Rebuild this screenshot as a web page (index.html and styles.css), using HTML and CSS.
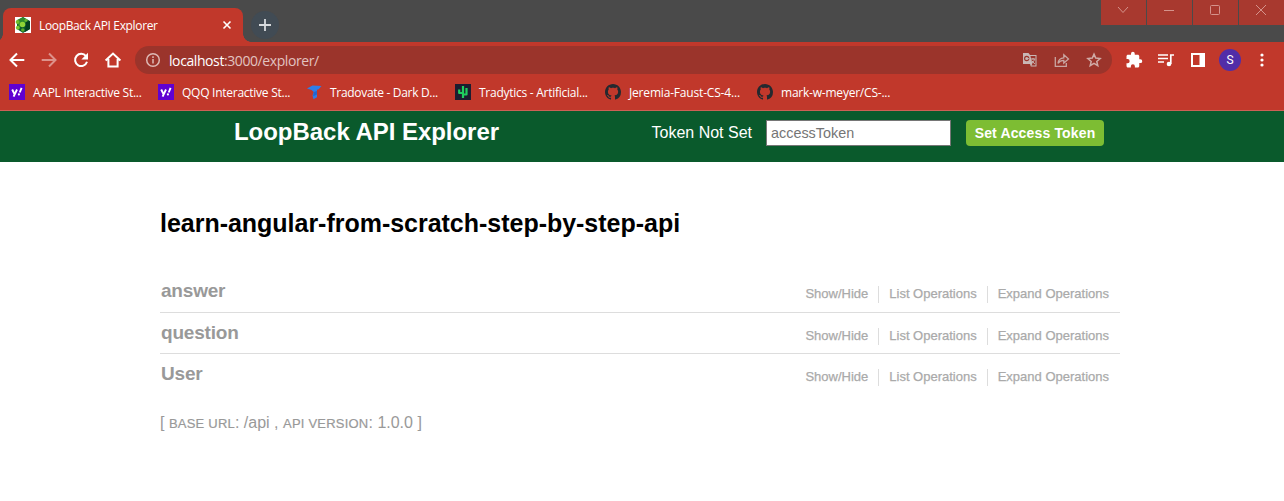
FILE: index.html
```html
<!DOCTYPE html>
<html lang="en">
<head>
<meta charset="utf-8">
<title>LoopBack API Explorer</title>
<link rel="stylesheet" href="styles.css">
</head>
<body>
<svg class="defs" width="0" height="0">
  <symbol id="yahoo" viewBox="0 0 16 16"><path fill="#5f01d1" d="M0 0h16v16H0z"/><path fill="none" stroke="#fff" stroke-width="1.9" d="M3.200 5.500l2.300 4.700M8 5.500L4.600 12.600M12.600 3.800l-1.900 4.700"/><circle cx="9.900" cy="10.400" r="1.100" fill="#fff"/></symbol>
  <symbol id="github" viewBox="0 0 16 16"><path fill="#24292f" d="M8 0C3.58 0 0 3.58 0 8c0 3.54 2.29 6.53 5.47 7.59.4.07.55-.17.55-.38 0-.19-.01-.82-.01-1.49-2.01.37-2.53-.49-2.69-.94-.09-.23-.48-.94-.82-1.13-.28-.15-.68-.52-.01-.53.63-.01 1.08.58 1.23.82.72 1.21 1.87.87 2.33.66.07-.52.28-.87.51-1.07-1.78-.2-3.64-.89-3.64-3.95 0-.87.31-1.59.82-2.15-.08-.2-.36-1.02.08-2.12 0 0 .67-.21 2.2.82.64-.18 1.32-.27 2-.27s1.36.09 2 .27c1.53-1.04 2.2-.82 2.2-.82.44 1.1.16 1.92.08 2.12.51.56.82 1.27.82 2.15 0 3.07-1.87 3.75-3.65 3.95.29.25.54.73.54 1.48 0 1.07-.01 1.93-.01 2.2 0 .21.15.46.55.38A8.01 8.01 0 0016 8c0-4.42-3.58-8-8-8z"/></symbol>
</svg>

<div class="tabstrip">
  <div class="tab">
    <svg class="favicon" width="16" height="16" viewBox="0 0 16 16"><path fill="#fff" d="M0 0h16v16H0z"/><path fill="#0a5a2c" d="M8 0l7 4v8l-7 4-6-4V4z"/><path fill="#043f20" d="M11 5l4-1v8l-5 3z"/><path fill="#2e8a2c" d="M2 3l6-3 4 3-3 5-6 2z"/><circle cx="7.500" cy="7.500" r="2.800" fill="#8fd436"/><circle cx="2.600" cy="5" r="2" fill="#6fbe2e"/><circle cx="2.800" cy="10.800" r="2" fill="#7cc832"/><circle cx="11" cy="3.300" r="1.500" fill="#69b82c"/><circle cx="7.800" cy="13" r="1.800" fill="#58a82c"/></svg>
    <span class="tab-title">LoopBack API Explorer</span>
    <svg class="tab-close" width="10" height="10" viewBox="0 0 10 10"><path d="M1.500 1.500l7 7m0-7l-7 7" stroke="#fff" stroke-width="1.600"/></svg>
  </div>
  <div class="new-tab"><svg width="14" height="14" viewBox="0 0 14 14"><path d="M7 1v12M1 7h12" stroke="#d7dadd" stroke-width="1.800"/></svg></div>
  <div class="window-buttons">
    <div class="wbtn"><svg width="12" height="12" viewBox="0 0 12 12"><path d="M1 3l5 5.500L11 3"/></svg></div>
    <div class="wbtn"><svg width="12" height="12" viewBox="0 0 12 12"><path d="M1 6.500h10"/></svg></div>
    <div class="wbtn"><svg width="12" height="12" viewBox="0 0 12 12"><rect x="1.500" y="1.500" width="9" height="9" rx="1"/></svg></div>
    <div class="wbtn"><svg width="12" height="12" viewBox="0 0 12 12"><path d="M1 1l10 10M11 1L1 11"/></svg></div>
  </div>
</div>

<div class="toolbar">
  <div class="nav">
    <svg width="24" height="24" viewBox="0 0 24 24"><path d="M19.300 12H6M12 5.500L5.500 12l6.500 6.500"/></svg>
    <svg class="disabled" width="24" height="24" viewBox="0 0 24 24"><path d="M4.700 12H18M12 5.500l6.500 6.500-6.500 6.500"/></svg>
    <svg width="24" height="24" viewBox="0 0 24 24"><path d="M17 8.200A6.100 6.100 0 1 0 18 13.800"/><path class="solid" d="M19 4.800v6.600h-6.600z"/></svg>
    <svg width="24" height="24" viewBox="0 0 24 24"><path d="M4.600 12.600L12 5.600l7.400 7M7.400 11v7.600h9.200V11"/></svg>
  </div>
  <div class="omnibox">
    <svg width="16" height="16" viewBox="0 0 16 16"><g fill="none" stroke="#deb9b5" stroke-width="1.500"><circle cx="8" cy="8" r="6.300"/><path d="M8 7v4.500M8 4.300v1.600"/></g></svg>
    <span class="url"><b>localhost</b>:3000/explorer/</span>
    <div class="page-actions">
      <svg width="16" height="16" viewBox="0 0 16 16"><path fill="#c9b7b5" d="M1 1h5.500L8 3h6.500v11.500H8.800L8 12H1z"/><path fill="#9b342b" d="M8.400 4h5.100v9.500H9.400l1-1.700z"/><circle cx="4.700" cy="6.500" r="2.100" fill="none" stroke="#9b342b" stroke-width="1.100"/><path d="M4.800 6.600h2.100M8.800 7h4.500M11 6v1.500m1.500-.2c-.5 1.800-1.500 3-3 4M9.600 8.600l3.200 3.400" fill="none" stroke="#c9b7b5" stroke-width="1"/></svg>
      <svg width="16" height="16" viewBox="0 0 16 16"><g fill="none" stroke="#c9a5a1" stroke-width="1.300"><path d="M1.300 5v9.400h11V11"/><path d="M4 11.300C4.400 7.700 6.400 6 9.800 5.800V2.700l4.700 4.200-4.700 4.200V8.300C7.200 8.300 5.400 9.200 4 11.300z"/></g></svg>
      <svg width="16" height="16" viewBox="0 0 16 16"><path fill="none" stroke="#d0aaa6" stroke-width="1.500" d="M8 2.100l1.700 4 4.400.4-3.300 2.900 1 4.300L8 11.400l-3.800 2.300 1-4.300-3.300-2.900 4.400-.4z"/></svg>
    </div>
  </div>
  <div class="extensions">
    <svg width="18" height="18" viewBox="0 0 24 24"><path fill="#fff" d="M20.5 11H19V7c0-1.1-.9-2-2-2h-4V3.5a2.5 2.5 0 0 0-5 0V5H4c-1.1 0-2 .9-2 2v3.800h1.500a2.700 2.700 0 0 1 0 5.400H2V20c0 1.100.9 2 2 2h3.800v-1.500a2.700 2.700 0 0 1 5.400 0V22H17c1.100 0 2-.9 2-2v-4h1.500a2.500 2.500 0 0 0 0-5z"/></svg>
    <svg width="18" height="18" viewBox="0 0 18 18"><path fill="none" stroke="#fff" stroke-width="1.700" d="M1 4h10M1 7.500h10M1 11h6M13.800 13V4H17"/><circle cx="12" cy="13" r="2.300" fill="#fff"/></svg>
    <svg width="18" height="18" viewBox="0 0 18 18"><path fill="#fff" fill-rule="evenodd" d="M2 2h14v14H2zM4 4v10h6.500V4z"/></svg>
    <div class="avatar">S</div>
    <svg class="more" width="4" height="16" viewBox="0 0 4 16"><g fill="#fff"><circle cx="2" cy="3" r="1.600"/><circle cx="2" cy="8" r="1.600"/><circle cx="2" cy="13" r="1.600"/></g></svg>
  </div>
</div>

<div class="bookmarks">
  <div class="bookmark"><svg width="16" height="16"><use href="#yahoo"/></svg><span>AAPL Interactive St...</span></div>
  <div class="bookmark"><svg width="16" height="16"><use href="#yahoo"/></svg><span>QQQ Interactive St...</span></div>
  <div class="bookmark bm-tradovate"><svg width="16" height="16" viewBox="0 0 16 16"><path fill="#2f7de8" d="M0 4.500L5.500 1.500 14.500 2l-2.800 3.200-1.700.6v7.500l-3.500 2-1-3.800L6.800 8 4.500 6z"/><path fill="#2265d0" d="M6.800 8l3.200-1v3.500l-4 1.800z"/></svg><span>Tradovate - Dark D...</span></div>
  <div class="bookmark bm-tradytics"><svg width="16" height="16" viewBox="0 0 16 16"><path fill="#1c1d30" d="M0 0h16v16H0z"/><path fill="none" stroke="#1fce5e" stroke-width="2.200" stroke-linejoin="round" d="M8 14V2M4.200 5.500V9H8M8 10.500h3.500V4"/></svg><span>Tradytics - Artificial...</span></div>
  <div class="bookmark bm-jeremia"><svg width="16" height="16"><use href="#github"/></svg><span>Jeremia-Faust-CS-4...</span></div>
  <div class="bookmark bm-mark"><svg width="16" height="16"><use href="#github"/></svg><span>mark-w-meyer/CS-...</span></div>
</div>

<header class="header">
  <h1 class="logo">LoopBack API Explorer</h1>
  <form class="token-form">
    <span class="token-status">Token Not Set</span>
    <input class="token-input" type="text" placeholder="accessToken">
    <a class="token-button">Set Access Token</a>
  </form>
</header>

<main class="content">
  <h2 class="api-title">learn-angular-from-scratch-step-by-step-api</h2>
  <ul class="resources">
    <li class="resource"><h3>answer</h3><div class="ops"><a>Show/Hide</a><a>List Operations</a><a>Expand Operations</a></div></li>
    <li class="resource"><h3>question</h3><div class="ops"><a>Show/Hide</a><a>List Operations</a><a>Expand Operations</a></div></li>
    <li class="resource"><h3>User</h3><div class="ops"><a>Show/Hide</a><a>List Operations</a><a>Expand Operations</a></div></li>
  </ul>
  <p class="footer">[ <span>base url</span>: /api , <span>api version</span>: 1.0.0 ]</p>
</main>
</body>
</html>
```
FILE: styles.css
```css
* { box-sizing: border-box; }
body { margin: 0; height: 501px; overflow: hidden; background: #fff; font-family: "Liberation Sans", Arial, sans-serif; }
h1, h2, h3, p, ul { margin: 0; padding: 0; }
svg { display: block; flex: none; }
.defs { display: none; }

/* Browser chrome */
.tabstrip, .toolbar, .bookmarks { display: flex; font-family: "Open Sans", "Noto Sans", sans-serif; color: #fff; white-space: nowrap; }
.tabstrip { height: 42px; background: #4a4a4a; padding-left: 3px; }
.tab { position: relative; width: 240px; height: 34px; margin-top: 8px; padding: 0 11px 0 12px; display: flex; align-items: center; background: #c1382b; border-radius: 8px 8px 0 0; }
.tab::before, .tab::after { content: ""; position: absolute; bottom: 0; width: 8px; height: 8px; }
.tab::before { left: -8px; background: radial-gradient(circle at 0 0, transparent 7.500px, #c1382b 8px); }
.tab::after { right: -8px; background: radial-gradient(circle at 100% 0, transparent 7.500px, #c1382b 8px); }
.tab-title { margin-left: 8px; font-size: 12px; letter-spacing: -.35px; flex: 1; }
.new-tab { width: 28px; height: 28px; margin: 11px 0 0 8px; border-radius: 50%; background: #414b54; display: flex; align-items: center; justify-content: center; }
.window-buttons { margin-left: auto; display: flex; gap: 1px; height: 25px; }
.wbtn { width: 45px; background: #a8392f; padding: 4px 0 0 16px; }
.wbtn svg { fill: none; stroke: #d5938c; stroke-width: 1; }

.toolbar { height: 35px; background: #c1382b; padding: 4px 0 3px 5px; }
.nav { display: flex; gap: 8px; align-items: center; width: 130px; }
.nav path { fill: none; stroke: #fff; stroke-width: 2; }
.nav .solid { fill: #fff; stroke: none; }
.nav .disabled { opacity: .45; }
.omnibox { width: 977px; height: 28px; border-radius: 14px; background: #9b342b; display: flex; align-items: center; padding: 0 10px; }
.url { margin-left: 8px; font-size: 14px; letter-spacing: -.41px; color: #e2c3c0; }
.url b { font-weight: 400; color: #fff; }
.page-actions { display: flex; gap: 16px; margin-left: auto; }
.extensions { display: flex; align-items: center; margin-left: 13px; gap: 14px; }
.avatar { width: 22px; height: 22px; margin-left: -2px; border-radius: 50%; background: #512da8; font: 12px/22px Roboto, sans-serif; text-align: center; }
.more { margin-left: 5px; }

.bookmarks { height: 34px; background: #c1382b; border-bottom: 1px solid #ce6056; padding-left: 9px; }
.bookmark { width: 149px; height: 30px; display: flex; align-items: center; gap: 8px; font-size: 12px; letter-spacing: -.26px; }
.bm-tradovate { width: 148px; gap: 7px; letter-spacing: -.31px; }
.bm-tradytics { width: 150px; }
.bm-jeremia { width: 152px; letter-spacing: -.18px; }
.bm-mark { letter-spacing: -.22px; }

/* Explorer header */
.header { height: 51px; background: #0a5a2c; color: #fff; display: flex; justify-content: space-between; padding: 9px 180px 0 234px; }
.logo { font-size: 24px; line-height: 24px; letter-spacing: -.04px; }
.token-form { display: flex; }
.token-status { font-size: 16px; line-height: 25px; margin-right: 14px; }
.token-input { width: 185px; height: 26px; margin: 0 15px 0 0; padding: 1px 4px; border: 1px solid #767676; border-radius: 0; font: 14.400px "Liberation Sans", sans-serif; }
.token-input::placeholder { color: #757575; }
.token-button { width: 138px; height: 26px; border-radius: 4px; background: #7dbd33; font: bold 14px/26px "Liberation Sans", sans-serif; letter-spacing: .15px; text-align: center; white-space: nowrap; }

/* Resource list */
.content { width: 960px; margin-left: 160px; padding-top: 46px; }
.api-title { font-size: 25px; line-height: 30px; letter-spacing: -.02px; white-space: nowrap; }
.resources { list-style: none; margin-top: 34px; }
.resource { height: 41px; padding-top: 1px; display: flex; justify-content: space-between; border-bottom: 1px solid #ddd; }
.resource:first-child { padding-top: 0; }
.resource:last-child { border: 0; }
.resource h3 { padding-left: 1px; color: #999; font-size: 19px; line-height: 37px; letter-spacing: -.2px; }
.ops { display: flex; padding: 14px 1px 0 0; }
.ops a { height: 17px; padding: 0 10px; border-right: 1px solid #ddd; color: #aaa; font-size: 13px; line-height: 16px; -webkit-text-stroke: .25px #aaa; }
.ops a:last-child { border: 0; }
.footer { margin-top: 18px; color: #999; font-size: 16px; line-height: 20px; }
.footer span { font-size: 13px; letter-spacing: .22px; text-transform: uppercase; -webkit-text-stroke: .2px #999; }
```
